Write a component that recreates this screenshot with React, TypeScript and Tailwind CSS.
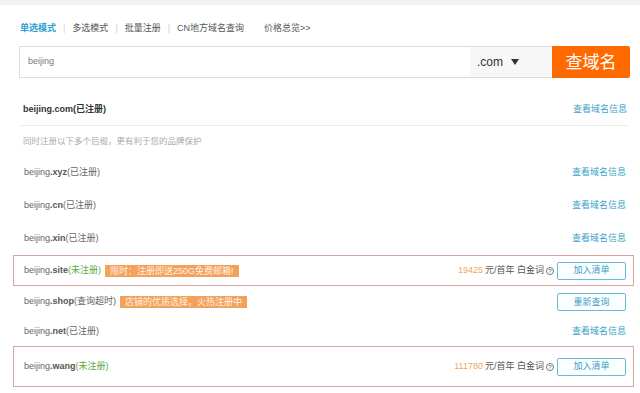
const font = { fontFamily: '"Liberation Sans", "Noto Sans CJK SC", sans-serif' };

type Row = {
  name: string;
  tld: string;
  status: string;
  kind: "taken" | "free" | "timeout";
  badge?: string;
  price?: string;
  h: string;
};

const rows: Row[] = [
  { name: "beijing", tld: ".xyz", status: "(已注册)", kind: "taken", h: "h-[33px]" },
  { name: "beijing", tld: ".cn", status: "(已注册)", kind: "taken", h: "h-[33px]" },
  { name: "beijing", tld: ".xin", status: "(已注册)", kind: "taken", h: "h-[33px]" },
  {
    name: "beijing",
    tld: ".site",
    status: "(未注册)",
    kind: "free",
    badge: "限时：注册即送250G免费邮箱!",
    price: "19425",
    h: "h-[31px]",
  },
  {
    name: "beijing",
    tld: ".shop",
    status: "(查询超时)",
    kind: "timeout",
    badge: "店铺的优质选择，火热注册中",
    h: "h-[32px]",
  },
  { name: "beijing", tld: ".net", status: "(已注册)", kind: "taken", h: "h-[28px]" },
  {
    name: "beijing",
    tld: ".wang",
    status: "(未注册)",
    kind: "free",
    price: "111780",
    h: "h-[41px]",
  },
];

function SmallButton({ label }: { label: string }) {
  return (
    <button className="w-[69px] h-[18px] border border-[#6bbad6] rounded-[2px] bg-[#fbfeff] text-[#3aa0c8] text-[9px] leading-none">
      {label}
    </button>
  );
}

function DomainRow({ row }: { row: Row }) {
  const boxed = row.kind === "free";
  return (
    <div
      className={`flex items-center justify-between pl-[10px] pr-[7px] ${row.h} ${
        boxed ? "border border-[#dca3a3]" : "border border-transparent"
      }`}
    >
      <div className="flex items-center text-[9px] text-[#666]">
        <span>{row.name}</span>
        <span className="font-bold text-[#555]">{row.tld}</span>
        <span className={row.kind === "free" ? "text-[#5fa83e]" : "text-[#666]"}>{row.status}</span>
        {row.badge && (
          <span className="ml-[4px] px-[5px] h-[12px] leading-[12px] bg-[#f3a25b] text-[#fff1e4] text-[9px]">
            {row.badge}
          </span>
        )}
      </div>
      {row.kind === "taken" && <a className="text-[9px] text-[#3aa3c9]">查看域名信息</a>}
      {row.kind === "timeout" && <SmallButton label="重新查询" />}
      {row.kind === "free" && (
        <div className="flex items-center gap-[2px] text-[9px] text-[#555]">
          <span className="text-[#efa565]">{row.price}</span>
          <span>元/首年 白金词</span>
          <span className="inline-flex items-center justify-center w-[8px] h-[8px] rounded-full border border-[#777] text-[6px] leading-none mr-[1px]">
            ?
          </span>
          <SmallButton label="加入清单" />
        </div>
      )}
    </div>
  );
}

export default function App() {
  return (
    <div className="w-[640px] h-[393px] bg-white overflow-hidden" style={font}>
      <div className="h-[5px] bg-[#f3f3f3]" />
      <div className="pl-[13px] pr-[6px]">
        <div className="flex items-center h-[32px] mt-[8px] pl-[7px] text-[9px] text-[#555]">
          <span className="text-[#2c9fd3] font-bold">单选模式</span>
          <span className="mx-[7px] text-[#ccc]">|</span>
          <span>多选模式</span>
          <span className="mx-[7px] text-[#ccc]">|</span>
          <span>批量注册</span>
          <span className="mx-[7px] text-[#ccc]">|</span>
          <span>CN地方域名查询</span>
          <span className="ml-[20px]">价格总览&gt;&gt;</span>
        </div>
        <div className="flex h-[32px] ml-[6px] mr-[4px] mt-[1px]">
          <div className="flex-1 flex items-center border border-[#dcdcdc] border-r-0 pl-[8px] text-[9px] text-[#777]">
            beijing
          </div>
          <div className="w-[82px] flex items-center pl-[7px] gap-[8px] border border-[#dcdcdc] border-x-0 bg-[#f7f7f7] text-[12px] text-[#333]">
            .com
            <svg width="8" height="6" viewBox="0 0 8 6">
              <path d="M0 0 H8 L4 6 Z" fill="#333" />
            </svg>
          </div>
          <button className="w-[78px] bg-[#ff6a00] rounded-r-[2px] text-white text-[17px] leading-none">
            查域名
          </button>
        </div>
        <div className="mt-[16px] ml-[7px] mr-[6px] flex items-center justify-between h-[32px] pl-[3px] pr-[1px] border-b border-[#ececec]">
          <span className="text-[9px] font-bold text-[#333]">beijing.com(已注册)</span>
          <a className="text-[9px] text-[#3aa3c9]">查看域名信息</a>
        </div>
        <div className="h-[30px] flex items-center pl-[10px] text-[8.5px] text-[#aaa]">
          同时注册以下多个后缀，更有利于您的品牌保护
        </div>
        {rows.map((r) => (
          <DomainRow key={r.tld} row={r} />
        ))}
      </div>
    </div>
  );
}
